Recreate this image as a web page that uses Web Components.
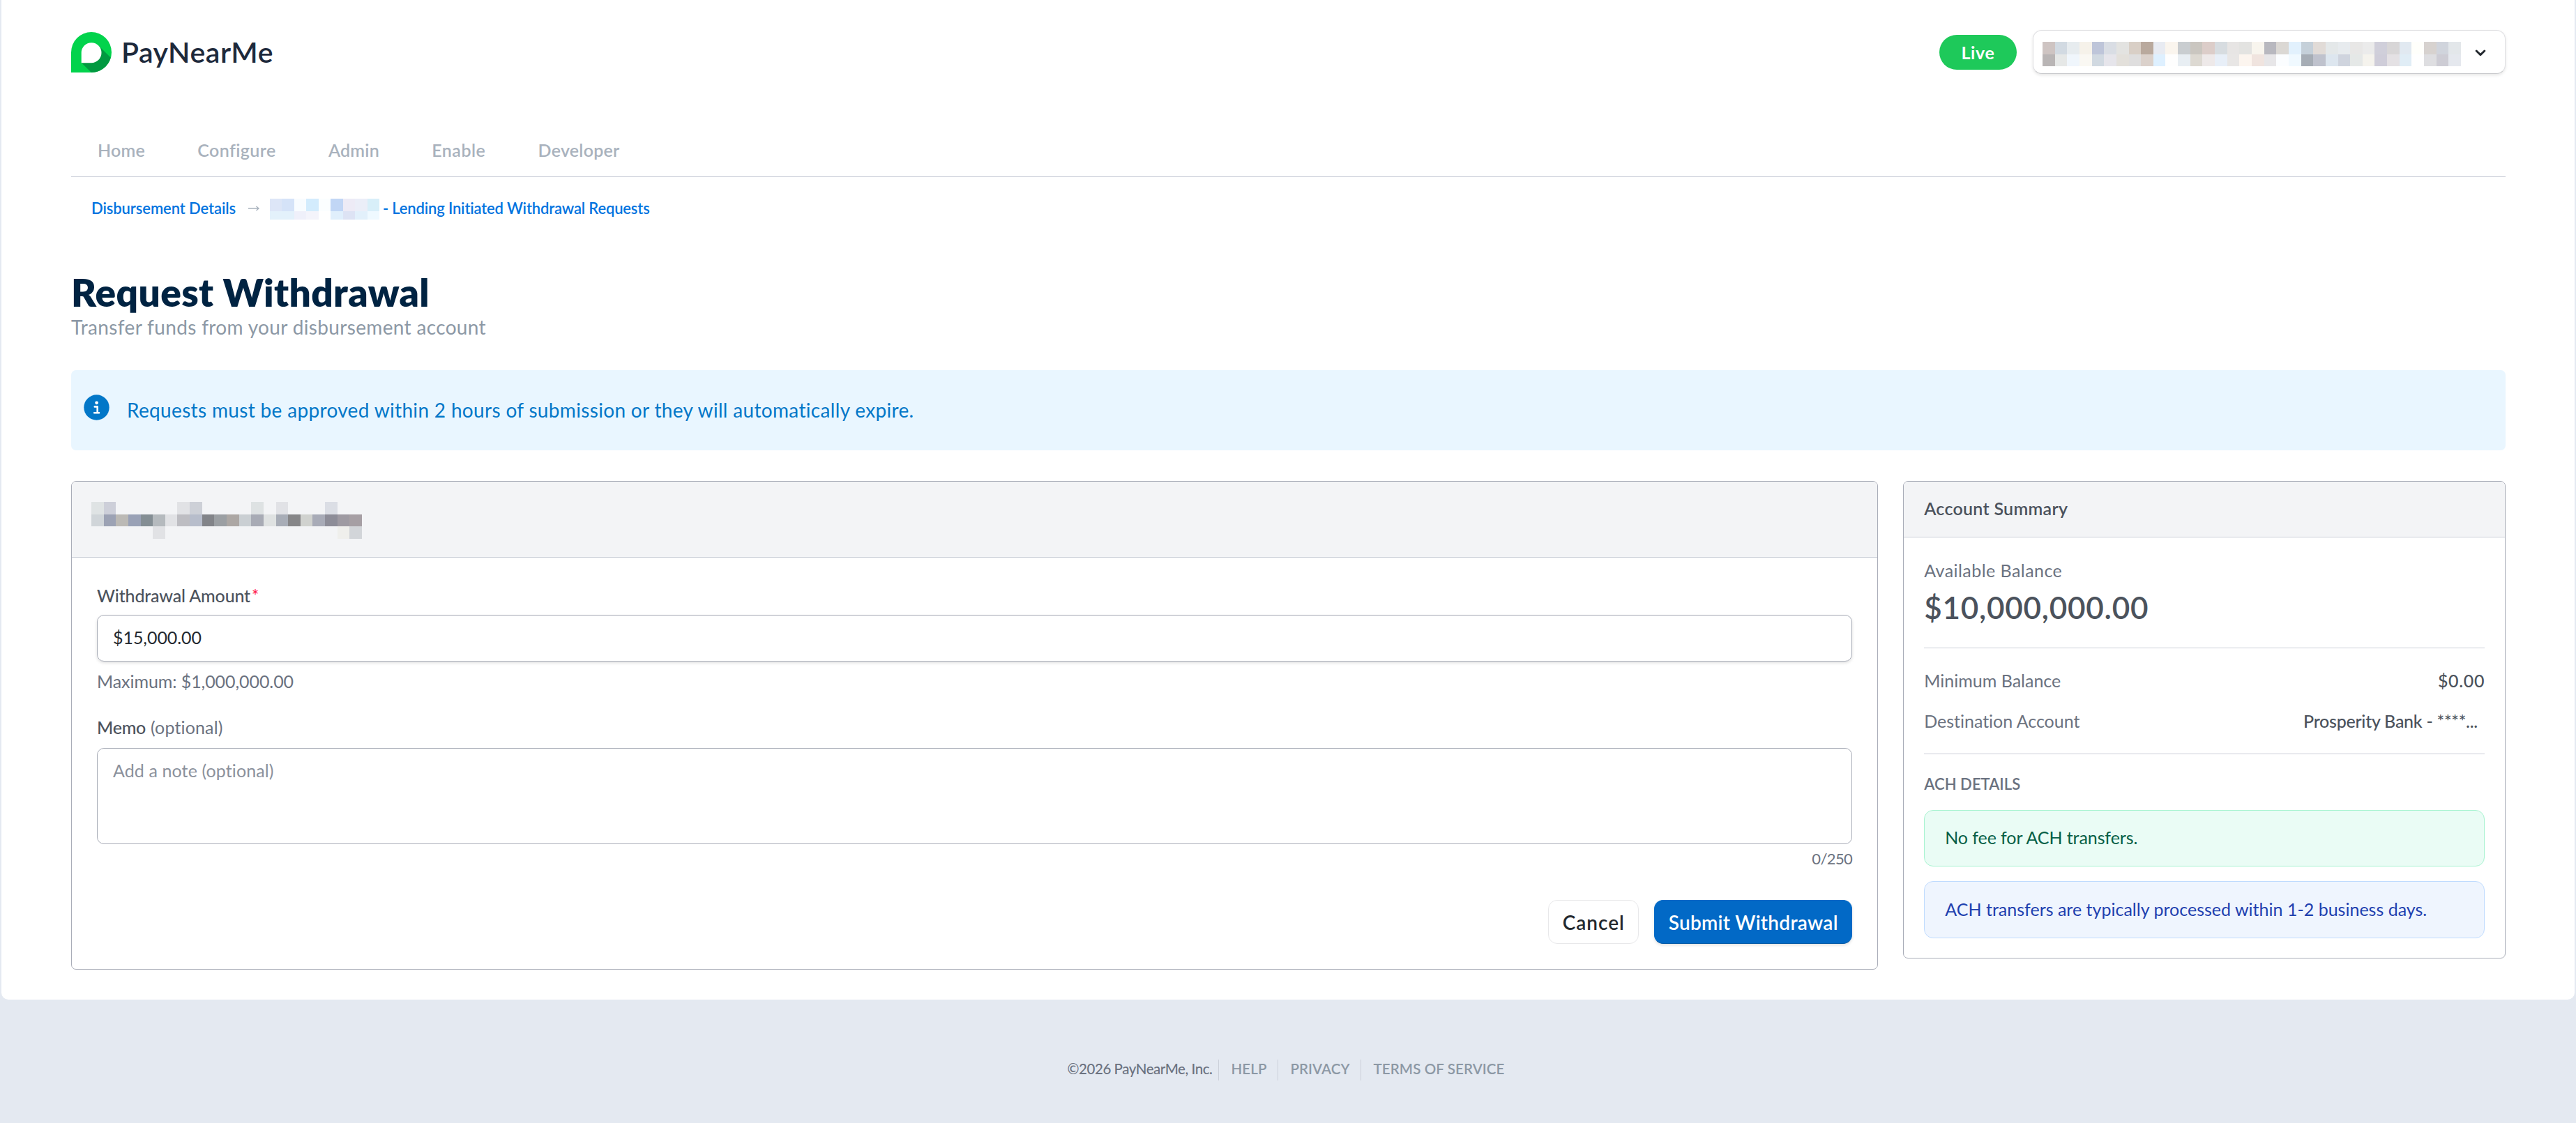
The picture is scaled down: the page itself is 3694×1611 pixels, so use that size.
<!DOCTYPE html>
<html lang="en">
<head>
<meta charset="utf-8">
<title>Request Withdrawal</title>
<style>
  body {
    margin: 0;
    background: #e4e9f1;
    font-family: Lato, "Open Sans", sans-serif;
    font-size: 25px;
    line-height: 30px;
    color: #4b5563;
  }
</style>
</head>
<body>
<app-page>
  <site-header slot="header"></site-header>
  <nav-bar slot="header">
    <fit-text width="68">Home</fit-text>
    <fit-text width="112">Configure</fit-text>
    <fit-text width="73">Admin</fit-text>
    <fit-text width="77">Enable</fit-text>
    <fit-text width="117">Developer</fit-text>
  </nav-bar>
  <bread-crumb slot="header"></bread-crumb>
  <page-title>
    <fit-text width="514">Request Withdrawal</fit-text>
    <fit-text slot="sub" width="595">Transfer funds from your disbursement account</fit-text>
  </page-title>
  <info-alert><fit-text width="1129">Requests must be approved within 2 hours of submission or they will automatically expire.</fit-text></info-alert>
  <card-row>
    <panel-card class="form" style="--head: 108px; --head-pad: 29px 28px 0">
      <pixel-mosaic slot="head" width="388" heights="18,17,18" rows="dfe3e4 cdcfd9 - - - - - e1e2e5 cdd0d7 - - - - dee2e3 - e1e2e6 - - - dbdee5 - -|d0d5d9 9ca2b4 bbb9b5 99a1b6 848e94 b5babe e1e2e5 bdbdc2 b7bdcb 828489 9b9fa3 aca7a4 cacfd3 a8abb5 dfe2e2 a8adb7 868688 d0d2cf a8abb7 8d8d98 9e9aa2 a69fa4|- - - - - e1e2e5 - - - - - - - - - - - - - - efefec d2d5d9"></pixel-mosaic>
      <withdrawal-form></withdrawal-form>
    </panel-card>
    <panel-card class="summary" style="--head: 79px; --head-pad: 23px 29px 0">
      <fit-text slot="head" width="206">Account Summary</fit-text>
      <account-summary></account-summary>
    </panel-card>
  </card-row>
</app-page>
<site-footer></site-footer>

<script>
function define(name, html) {
    customElements.define(name, class extends HTMLElement {
        constructor() {
            super();
            this.attachShadow({ mode: 'open' }).innerHTML = html;
        }
    });
}

define('app-page', `
  <style>
    :host {
      display: block;
      box-sizing: border-box;
      height: 1434px;
      margin: 0 2px;
      padding: 43px 99px 0 100px;
      background: #fff;
      border-radius: 0 0 10px 10px;
    }
  </style>
  <header><slot name="header"></slot></header>
  <main><slot></slot></main>
`);

define('site-header', `
  <style>
    :host { display: flex; justify-content: space-between; align-items: center; height: 63px; }
    .logo { display: flex; align-items: center; gap: 14px; height: 58px; }
    .logo svg { display: block; }
    .name { font-size: 41px; font-weight: 600; line-height: 58px; color: #1d293b; }
    .right { display: flex; align-items: center; gap: 23px; }
    .live {
      display: flex;
      justify-content: center;
      width: 111px;
      border-radius: 25px;
      background: #1ec95a;
      color: #fff;
      font-weight: 700;
      line-height: 50px;
    }
    .account {
      box-sizing: border-box;
      display: flex;
      align-items: flex-start;
      width: 678px;
      height: 63px;
      padding: 16px 13px;
      gap: 20px;
      background: #fff;
      border: 1px solid #dfdfe2;
      border-bottom-color: #c9cacd;
      border-radius: 13px;
      box-shadow: 0 2px 4px rgba(0, 0, 0, .1);
    }
    .account svg { margin-top: 11px; }
  </style>
  <div class="logo">
    <svg width="58" height="58" viewBox="0 0 58 58">
      <path fill="#02d34c" d="M0 58V29A29 29 0 1 1 29 58Z"/>
      <path fill="#019940" d="M39 19L56.8 36.8A29 29 0 0 1 29 58L14.7 44Z"/>
      <path fill="#fff" d="M14.7 44.2V29.5A14.4 14.5 0 1 1 29 44.2Z"/>
    </svg>
    <div class="name"><fit-text width="218">PayNearMe</fit-text></div>
  </div>
  <div class="right">
    <div class="live"><fit-text width="48">Live</fit-text></div>
    <div class="account">
      <pixel-mosaic width="600" heights="18,17" rows="cec4c2 d2dae2 e7ecef f6f2ea bec5d9 d9dde4 e3e3e1 d9cfc6 b9a99d e8ebf2 faf5ee c9cdd0 cac6c0 dccdc9 d7dce0 e7e5e4 e3e3e1 f8f5ee b8b8bf dbd8d4 e2f1fd c5d0d9 e1dbd7 e4e8e9 e7ebee e8e7e6 ebebeb d0cfda d8d6d7 e1e9f1 fffffb d7d2cf d0d4dc e3e7ea|b9b5b5 e6e8e7 f0f6fc faf8f3 d1d9e1 e6e5eb e3e0db dfdede dbd1cb def0ff fefefe e8eef3 ddd9d2 eee9e9 e8eff8 e8e6e5 fcf5ef f0e4df e7e6e8 fbfdff f0f9ff a6adb5 bfc2cd dde6ef cfd4de e5e8e7 f5f3ed cfcdd9 e4e1e4 e0edf6 - dedee1 cdccd4 e5e8ee"></pixel-mosaic>
      <svg width="16" height="10" viewBox="0 0 16 10"><path d="M2.2 2L8 7.6L13.8 2" fill="none" stroke="#24292f" stroke-width="2.9" stroke-linecap="round" stroke-linejoin="round"/></svg>
    </div>
  </div>
`);

define('nav-bar', `
  <style>
    :host {
      display: flex;
      gap: 75.3px;
      padding: 94px 38px 23px;
      border-bottom: 1px solid #cdd0da;
      font-weight: 600;
      color: #a9b2bd;
    }
  </style>
  <slot></slot>
`);

define('bread-crumb', `
  <style>
    :host {
      display: flex;
      height: 30px;
      margin-top: 31px;
      padding-left: 29px;
      font-size: 22px;
      font-weight: 600;
      line-height: 27px;
      color: #0274df;
    }
    svg { margin: 9px 14px 0 17px; }
    .rest { margin-left: 5px; }
  </style>
  <fit-text width="207">Disbursement Details</fit-text>
  <svg width="18" height="10" viewBox="0 0 18 10"><path d="M1 5H16M12.5 2L16 5L12.5 8" fill="none" stroke="#a9b2bd" stroke-width="1.4"/></svg>
  <pixel-mosaic width="157" heights="18,12" rows="dde6f7 d5e3f8 f8fcff d3ecfd fbfeff c1d6f5 edebf6 ebeef8 d8eff9|e3f1fb e3f1fb eff0fa f4f4fb - e0effc dde3f4 e2f0fb eff9ff"></pixel-mosaic>
  <div class="rest"><fit-text width="383">- Lending Initiated Withdrawal Requests</fit-text></div>
`);

define('page-title', `
  <style>
    :host { display: block; padding-top: 74px; }
    h1 { margin: 0; font-size: 55px; line-height: 60px; font-weight: 800; color: #002342; }
    p { margin: 3px 0 0; font-size: 28px; line-height: 34px; color: #8c98a5; }
  </style>
  <h1><slot></slot></h1>
  <p><slot name="sub"></slot></p>
`);

define('info-alert', `
  <style>
    :host {
      box-sizing: border-box;
      display: flex;
      height: 115px;
      margin-top: 45px;
      padding: 35px 18px;
      gap: 25px;
      background: #e9f6ff;
      border-radius: 7px;
      font-size: 28px;
      line-height: 44px;
      color: #0277c8;
    }
  </style>
  <svg width="37" height="37" viewBox="0 0 37 37">
    <circle cx="18.5" cy="18.5" r="18.2" fill="#0277c8"/>
    <circle cx="18.6" cy="11.8" r="2.4" fill="#fff"/>
    <path d="M15.8 17.4H19.7V26M15.2 26.3H22" fill="none" stroke="#fff" stroke-width="2.6" stroke-linecap="round" stroke-linejoin="round"/>
  </svg>
  <slot></slot>
`);

define('card-row', `
  <style>
    :host {
      display: grid;
      grid-template-columns: 3fr 1fr;
      align-items: start;
      gap: 36px;
      margin-top: 44px;
    }
  </style>
  <slot></slot>
`);

define('panel-card', `
  <style>
    :host { display: block; border: 1px solid #a9adb8; border-radius: 7px; overflow: hidden; }
    .head {
      height: var(--head);
      background: #f3f4f6;
      border-bottom: 1px solid #cbcfd8;
      font-weight: 600;
    }
    .in { padding: var(--head-pad); color: #4b525c; }
  </style>
  <div class="head"><div class="in"><slot name="head"></slot></div></div>
  <slot></slot>
`);

define('withdrawal-form', `
  <style>
    :host { display: block; padding: 39px 36px 36px; }
    .label { display: flex; height: 30px; color: #4b525c; font-weight: 500; }
    .label sup { margin-left: 2px; font-size: 24px; line-height: 32px; vertical-align: top; color: #ff1f4f; }
    .label .opt { margin-left: 7px; font-weight: 400; color: #6b7280; }
    .field {
      box-sizing: border-box;
      border: 1px solid #a9adb8;
      border-radius: 10px;
      padding-left: 22px;
    }
    .amount {
      height: 67px;
      margin: 13px 0;
      line-height: 63px;
      color: #24292f;
      box-shadow: 0 2px 4px rgba(0, 0, 0, .13);
    }
    .hint { margin-bottom: 36px; color: #6b7280; }
    .memo { height: 138px; margin: 15px 0 8px; padding-top: 16px; color: #8b919c; }
    .count { text-align: right; font-size: 22px; line-height: 26px; color: #6b7280; }
    .actions { display: flex; justify-content: flex-end; gap: 22px; margin-top: 46px; }
  </style>
  <div class="label"><fit-text width="220">Withdrawal Amount</fit-text><sup>*</sup></div>
  <div class="field amount"><fit-text width="127">$15,000.00</fit-text></div>
  <div class="hint"><fit-text width="282">Maximum: $1,000,000.00</fit-text></div>
  <div class="label"><fit-text width="70">Memo</fit-text><fit-text class="opt" width="104">(optional)</fit-text></div>
  <div class="field memo"><fit-text width="231">Add a note (optional)</fit-text></div>
  <div class="count"><fit-text width="58">0/250</fit-text></div>
  <div class="actions">
    <pn-button style="width: 130px"><fit-text width="89">Cancel</fit-text></pn-button>
    <pn-button class="primary" style="width: 284px"><fit-text width="243">Submit Withdrawal</fit-text></pn-button>
  </div>
`);

define('pn-button', `
  <style>
    :host {
      box-sizing: border-box;
      display: flex;
      justify-content: center;
      height: 63px;
      border: 1px solid #e8e8ea;
      border-radius: 13px;
      font-size: 28px;
      font-weight: 600;
      line-height: 62px;
      color: #24292f;
    }
    :host(.primary) {
      background: #0269c6;
      border-color: #0269c6;
      border-bottom-color: #0258a5;
      color: #fff;
      box-shadow: 0 2px 4px rgba(0, 0, 0, .12);
    }
  </style>
  <slot></slot>
`);

define('account-summary', `
  <style>
    :host { display: block; padding: 32px 29px 28px; color: #6b7280; }
    .balance { margin-top: 13px; font-size: 44px; line-height: 50px; font-weight: 600; color: #4b525c; }
    hr { height: 1px; margin: 33px 0 31px; border: 0; background: #cbcfd8; }
    .row { display: flex; justify-content: space-between; }
    .row + .row { margin-top: 28px; }
    .row b { font-weight: 500; color: #4b525c; }
    .bank { margin-right: 10px; }
    .title { font-size: 22px; line-height: 27px; margin-bottom: -1px; font-weight: 600; }
    hr.second { margin: 32px 0 29px; }
  </style>
  <div><fit-text width="198">Available Balance</fit-text></div>
  <div class="balance"><fit-text width="322">$10,000,000.00</fit-text></div>
  <hr>
  <div class="row"><fit-text width="196">Minimum Balance</fit-text><b><fit-text width="67">$0.00</fit-text></b></div>
  <div class="row"><fit-text width="224">Destination Account</fit-text><b class="bank"><fit-text width="250">Prosperity Bank - ****...</fit-text></b></div>
  <hr class="second">
  <div class="title"><fit-text width="138">ACH DETAILS</fit-text></div>
  <note-box class="green" style="margin-top: 25px; height: 81px"><fit-text width="276">No fee for ACH transfers.</fit-text></note-box>
  <note-box class="blue" style="margin-top: 21px; height: 82px"><fit-text width="691">ACH transfers are typically processed within 1-2 business days.</fit-text></note-box>
`);

define('note-box', `
  <style>
    :host {
      box-sizing: border-box;
      display: block;
      padding-left: 29px;
      border: 1px solid;
      border-radius: 13px;
      line-height: 77px;
    }
    :host(.green) { background: #eafcf5; border-color: #a7f3d0; color: #065f46; }
    :host(.blue) { background: #eff5fe; border-color: #bfdbfe; color: #1e40af; line-height: 78px; }
  </style>
  <slot></slot>
`);

define('site-footer', `
  <style>
    :host {
      display: flex;
      justify-content: center;
      padding: 86px 6px 61px 0;
      font-size: 20.5px;
      font-weight: 600;
      line-height: 27px;
      color: #8c98a5;
    }
    .copy { margin-right: 8px; font-weight: 500; color: #6b7280; }
    .link { box-sizing: border-box; height: 30px; padding: 0 15px 0 18px; border-left: 1px solid #ccd0da; }
    .link:last-child { padding-right: 0; }
  </style>
  <div class="copy"><fit-text width="208">©2026 PayNearMe, Inc.</fit-text></div>
  <div class="link"><fit-text width="51">HELP</fit-text></div>
  <div class="link"><fit-text width="85">PRIVACY</fit-text></div>
  <div class="link"><fit-text width="188">TERMS OF SERVICE</fit-text></div>
`);

// Redacted text: a strip of flat blocks, "-" leaves a block empty
class PixelMosaic extends HTMLElement {
    constructor() {
        super();
        this.attachShadow({ mode: 'open' });
    }

    connectedCallback() {
        const width = Number(this.getAttribute('width'));
        const heights = this.getAttribute('heights').split(',').map(Number);
        const rows = this.getAttribute('rows').split('|').map(row => row.split(' '));
        let y = 0;
        let rects = '';
        rows.forEach((row, r) => {
            row.forEach((color, i) => {
                const x = Math.round(width * i / row.length);
                const next = Math.round(width * (i + 1) / row.length);
                if (color !== '-') {
                    rects += `<rect x="${x}" y="${y}" width="${next - x}" height="${heights[r]}" fill="#${color}"/>`;
                }
            });
            y += heights[r];
        });
        this.shadowRoot.innerHTML = `
      <style>
        :host { display: block; flex: none; }
        svg { display: block; }
      </style>
      <svg width="${width}" height="${y}" shape-rendering="crispEdges">${rects}</svg>
    `;
    }
}
customElements.define('pixel-mosaic', PixelMosaic);

// One line of text, tracked so that it takes up the given width
class FitText extends HTMLElement {
    constructor() {
        super();
        this.attachShadow({ mode: 'open' }).innerHTML = `
      <style>
        :host { display: inline-block; white-space: nowrap; vertical-align: top; }
      </style>
      <slot></slot>
    `;
    }

    connectedCallback() {
        const width = Number(this.getAttribute('width'));
        const spacing = (width - this.getBoundingClientRect().width) / this.textContent.length;
        this.style.letterSpacing = spacing.toFixed(3) + 'px';
    }
}
customElements.define('fit-text', FitText);
</script>
</body>
</html>
